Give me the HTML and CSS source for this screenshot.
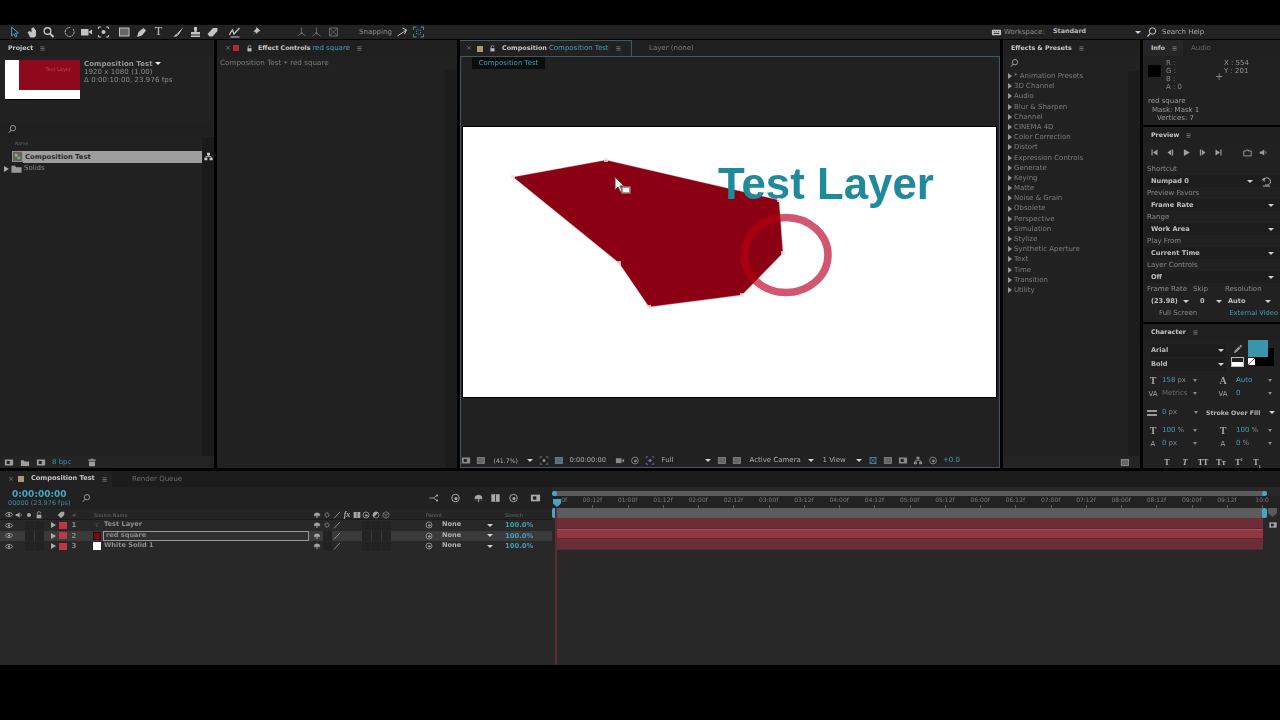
FILE: index.html
```html
<!DOCTYPE html>
<html lang="en">
<head>
<meta charset="utf-8">
<title>Composition Test</title>
<link rel="stylesheet" href="styles.css">
</head>
<body>
<svg class="defs" width="0" height="0" aria-hidden="true">
  <symbol id="i-arrow" viewBox="0 0 12 12"><path d="M3 1v9l2.400-2 1.600 3 1.500-.8-1.600-2.900 3-.3z" fill="none" stroke="currentColor"/></symbol>
  <symbol id="i-hand" viewBox="0 0 12 12"><path d="M2 6l2 4c.5 1 1 1.500 2 1.500h2c1.500 0 2.500-1 2.500-2.500V4H9.500v2V2.500H8.500V6V1.500H7.200V6V2H6v4.500L4.500 5z" fill="currentColor"/></symbol>
  <symbol id="i-zoom" viewBox="0 0 12 12"><circle cx="5" cy="5" r="3.300" fill="none" stroke="currentColor" stroke-width="1.400"/><path d="M7.500 7.500l3.500 3.500" stroke="currentColor" stroke-width="2"/></symbol>
  <symbol id="i-search" viewBox="0 0 12 12"><circle cx="6" cy="5" r="3.200" fill="none" stroke="currentColor"/><path d="M3.800 7.300L1 10.500" stroke="currentColor" stroke-width="1.200"/></symbol>
  <symbol id="i-rotate" viewBox="0 0 12 12"><path d="M9.500 3a4.500 4.500 0 1 1-3-1.500" fill="none" stroke="currentColor" stroke-dasharray="2 .8"/></symbol>
  <symbol id="i-camera" viewBox="0 0 12 12"><rect x="0.500" y="3" width="7.500" height="6.500" fill="currentColor"/><path d="M8 6l3.500-2.500v5z" fill="currentColor"/></symbol>
  <symbol id="i-orbit" viewBox="0 0 12 12"><circle cx="6" cy="6" r="2" fill="currentColor"/><path d="M1 3V1h2.500M8.500 1H11v2M11 9v2H8.500M3.500 11H1V9" fill="none" stroke="currentColor"/></symbol>
  <symbol id="i-rect" viewBox="0 0 12 12"><rect x="1" y="2" width="9.500" height="8" fill="#666" stroke="currentColor"/></symbol>
  <symbol id="i-pen" viewBox="0 0 12 12"><path d="M1.500 11l1.500-5 5-4 2.500 2.500-4 5z" fill="currentColor"/></symbol>
  <symbol id="i-brush" viewBox="0 0 12 12"><path d="M11 1L4.500 7.500 6 9zM4 8c-1.500.5-1.500 2-3 2.500 2 .5 4 0 4.500-1.500z" fill="currentColor"/></symbol>
  <symbol id="i-stamp" viewBox="0 0 12 12"><path d="M4.500 1h3v2.500L7 6h3.500v2.500h-9V6H5L4.500 3.500zM1.500 9.500h9V11h-9z" fill="currentColor"/></symbol>
  <symbol id="i-eraser" viewBox="0 0 12 12"><path d="M1 8l5.500-6h4.500L11 5 6 10.500H3z" fill="currentColor"/></symbol>
  <symbol id="i-roto" viewBox="0 0 12 12"><path d="M1 9c1-3 2-4 3-5l1.500 4L11 2" fill="none" stroke="currentColor" stroke-width="1.300"/><path d="M2 11h9" stroke="currentColor"/></symbol>
  <symbol id="i-pin" viewBox="0 0 12 12"><path d="M7 1l4 4-2 .5L7 8 6.500 6 2 11l4-5-2-.5L6.500 3z" fill="currentColor"/></symbol>
  <symbol id="i-axis" viewBox="0 0 12 12"><path d="M6 1.500V7M6 7l-4 3M6 7l4 3" stroke="currentColor" fill="none"/><circle cx="6" cy="7" r="1.200" fill="currentColor"/></symbol>
  <symbol id="i-box3" viewBox="0 0 12 12"><path d="M2 2l8 8M10 2l-8 8M2 2h8v8H2z" stroke="currentColor" fill="none"/></symbol>
  <symbol id="i-snap" viewBox="0 0 12 12"><path d="M1 10L10 4M6 2l4 2-2 4" stroke="currentColor" fill="none"/></symbol>
  <symbol id="i-snap2" viewBox="0 0 12 12"><path d="M1 4V1h3M8 1h3v3M11 8v3H8M4 11H1V8" stroke="#3c8f96" fill="none"/><rect x="4" y="4" width="4" height="4" fill="none" stroke="#3c8f96" stroke-dasharray="1 1"/></symbol>
  <symbol id="i-menu" viewBox="0 0 6 6"><path d="M.5 1h5M.5 3h5M.5 5h5" stroke="currentColor"/></symbol>
  <symbol id="i-flow" viewBox="0 0 12 12"><rect x="4" y="1" width="4" height="3.500" fill="currentColor"/><rect x="0.500" y="7.500" width="4" height="3.500" fill="currentColor"/><rect x="7.500" y="7.500" width="4" height="3.500" fill="currentColor"/><path d="M6 4v2M2.500 7.500V6h7v1.500" stroke="currentColor" fill="none"/></symbol>
  <symbol id="i-tree" viewBox="0 0 12 12"><path d="M1 6h5M6 6l4-3M6 6l4 3" stroke="currentColor" fill="none"/><rect x="9" y="2" width="2.500" height="2" fill="currentColor"/><rect x="9" y="8" width="2.500" height="2" fill="currentColor"/></symbol>
  <symbol id="i-comp" viewBox="0 0 12 12"><rect x="0.500" y="0.500" width="11" height="11" fill="#5e6a50" stroke="#999"/><rect x="3" y="3" width="3" height="3" fill="#b98"/><rect x="6" y="6" width="3" height="3" fill="#6a8"/></symbol>
  <symbol id="i-folder" viewBox="0 0 12 12"><path d="M.5 3h4l1 1.500h6V10.500H.5z" fill="currentColor"/></symbol>
  <symbol id="i-trash" viewBox="0 0 12 12"><path d="M4.500 1h3v1H11v1.500H1V2h3.500zM2 4.500h8V11H2z" fill="currentColor"/></symbol>
  <symbol id="i-film" viewBox="0 0 12 12"><rect x="0.500" y="2" width="11" height="8" fill="currentColor"/><rect x="3" y="4" width="4" height="4" fill="#222"/></symbol>
  <symbol id="i-lock" viewBox="0 0 12 12"><path d="M3.500 5.500V3.500a2.500 2.500 0 0 1 5 0" fill="none" stroke="currentColor" stroke-width="1.200"/><rect x="2.500" y="5.500" width="7" height="5.500" fill="currentColor"/></symbol>
  <symbol id="i-first" viewBox="0 0 12 12"><path d="M2 2v8h1.500V2zM10 2v8L4 6z" fill="currentColor"/></symbol>
  <symbol id="i-prev" viewBox="0 0 12 12"><path d="M8 2v8h1.500V2zM7 2v8L2 6z" fill="currentColor"/></symbol>
  <symbol id="i-play" viewBox="0 0 12 12"><path d="M2.500 1.500v9L10.500 6z" fill="currentColor"/></symbol>
  <symbol id="i-next" viewBox="0 0 12 12"><path d="M2.500 2v8H4V2zM5 2v8l5-4z" fill="currentColor"/></symbol>
  <symbol id="i-last" viewBox="0 0 12 12"><path d="M2 2v8l6-4zM8.500 2v8H10V2z" fill="currentColor"/></symbol>
  <symbol id="i-loop" viewBox="0 0 12 12"><path d="M1 4h3l1-1.500h2V4h4v6.500H1z" fill="none" stroke="currentColor" stroke-width="1.200"/></symbol>
  <symbol id="i-speaker" viewBox="0 0 12 12"><path d="M1 4.500h2.500L7 2v8L3.500 7.500H1z" fill="currentColor"/><path d="M8.500 4c1 1 1 3 0 4" stroke="currentColor" fill="none"/></symbol>
  <symbol id="i-reset" viewBox="0 0 12 12"><path d="M2.500 5a4 4 0 1 1 2 4.500M1 4.500l2.500-2L3.500 6M2 11h8" fill="none" stroke="currentColor"/></symbol>
  <symbol id="i-drop" viewBox="0 0 12 12"><path d="M1 11l1-3 5-5 2 2-5 5zM7.500 2.500L9.500 1l1.500 1.500L9.500 4.500z" fill="currentColor"/></symbol>
  <symbol id="i-eye" viewBox="0 0 12 12"><path d="M1 6c2-3.500 8-3.500 10 0-2 3.500-8 3.500-10 0z" fill="none" stroke="currentColor" stroke-width="1.200"/><circle cx="6" cy="6" r="1.500" fill="currentColor"/></symbol>
  <symbol id="i-tag" viewBox="0 0 12 12"><path d="M1 6l5-5h5v5l-5 5z" fill="currentColor"/></symbol>
  <symbol id="i-shy" viewBox="0 0 12 12"><path d="M1.500 7a4.500 4.500 0 0 1 9 0zM5.500 7h1v3.500h-1zM3 8l-1 1.500M9 8l1 1.500" fill="currentColor" stroke="currentColor" stroke-width=".5"/></symbol>
  <symbol id="i-gear" viewBox="0 0 12 12"><circle cx="6" cy="6" r="3" fill="none" stroke="currentColor" stroke-width="1.500" stroke-dasharray="1.500 .6"/></symbol>
  <symbol id="i-slash" viewBox="0 0 12 12"><path d="M1.500 11L10.500 1.500" stroke="currentColor" stroke-width="1.200"/></symbol>
  <symbol id="i-spiral" viewBox="0 0 12 12"><circle cx="6" cy="6" r="4.500" fill="none" stroke="currentColor" stroke-width="1.200"/><circle cx="6.500" cy="6.500" r="1.800" fill="currentColor"/></symbol>
  <symbol id="i-half" viewBox="0 0 12 12"><circle cx="6" cy="6" r="4.500" fill="none" stroke="currentColor"/><path d="M2.800 9.200a4.500 4.500 0 0 1 6.400-6.400z" fill="currentColor"/></symbol>
  <symbol id="i-cube" viewBox="0 0 12 12"><path d="M6 1l4.500 2.500v5L6 11 1.500 8.500v-5zM1.500 3.500L6 6l4.500-2.500M6 6v5" fill="none" stroke="currentColor" stroke-width=".8"/></symbol>
  <symbol id="i-book" viewBox="0 0 12 12"><rect x="1" y="1.500" width="10" height="9" fill="currentColor"/><path d="M6 2v8" stroke="#222"/></symbol>
  <symbol id="i-keys" viewBox="0 0 12 12"><rect x="1" y="3" width="10" height="6" rx="1" fill="currentColor"/><path d="M3 5h1M5.500 5h1M8 5h1M3 7h6" stroke="#222"/></symbol>
</svg>

<div class="app">
  <div class="letterbox-top"></div>

  <div class="toolbar">
    <span class="tools">
      <svg class="ti blue"><use href="#i-arrow"/></svg>
      <svg class="ti"><use href="#i-hand"/></svg>
      <svg class="ti"><use href="#i-zoom"/></svg>
      <svg class="ti sep"><use href="#i-rotate"/></svg>
      <svg class="ti"><use href="#i-camera"/></svg>
      <svg class="ti"><use href="#i-orbit"/></svg>
      <svg class="ti sep"><use href="#i-rect"/></svg>
      <svg class="ti"><use href="#i-pen"/></svg>
      <span class="ti t-glyph">T</span>
      <svg class="ti sep-s"><use href="#i-brush"/></svg>
      <svg class="ti"><use href="#i-stamp"/></svg>
      <svg class="ti"><use href="#i-eraser"/></svg>
      <svg class="ti sep-r"><use href="#i-roto"/></svg>
      <svg class="ti sep-p"><use href="#i-pin"/></svg>
      <svg class="ti dim sep-l"><use href="#i-axis"/></svg>
      <svg class="ti dim"><use href="#i-axis"/></svg>
      <svg class="ti dim"><use href="#i-box3"/></svg>
    </span>
    <span class="snap-label">Snapping</span>
    <svg class="ti snap-a"><use href="#i-snap"/></svg>
    <svg class="ti"><use href="#i-snap2"/></svg>
    <span class="grow"></span>
    <svg class="keys"><use href="#i-keys"/></svg>
    <span class="workspace-label">Workspace:</span>
    <span class="workspace-val">Standard</span>
    <span class="caret wk"></span>
    <svg class="ti help-i"><use href="#i-search"/></svg>
    <span class="help">Search Help</span>
  </div>

  <div class="panels">
    <section class="panel project">
      <header class="phead">
        <b>Project</b><svg class="menu"><use href="#i-menu"/></svg>
      </header>
      <div class="proj-info">
        <div class="thumb"><div class="thumb-red">Test Layer</div></div>
        <div class="proj-meta">
          <div class="pm-title">Composition Test <span class="caret sm"></span></div>
          <div>1920 x 1080 (1.00)</div>
          <div>Δ 0:00:10:00, 23.976 fps</div>
        </div>
      </div>
      <div class="proj-search"><svg class="si"><use href="#i-search"/></svg></div>
      <div class="proj-list">
        <div class="col-name">Name</div>
        <div class="proj-row selected-row">
          <svg class="ri"><use href="#i-comp"/></svg>
          <span class="sel-name">Composition Test</span>
          <svg class="flow"><use href="#i-flow"/></svg>
        </div>
        <div class="proj-row">
          <span class="tri"></span>
          <svg class="ri folder"><use href="#i-folder"/></svg>
          <span class="solids">Solids</span>
        </div>
      </div>
      <div class="pfoot">
        <svg class="fi"><use href="#i-film"/></svg>
        <svg class="fi"><use href="#i-folder"/></svg>
        <svg class="fi"><use href="#i-film"/></svg>
        <span class="bpc">8 bpc</span>
        <svg class="fi trash"><use href="#i-trash"/></svg>
      </div>
    </section>

    <section class="panel effect">
      <header class="phead ph-ec">
        <span class="x">×</span><span class="swatch red"></span><svg class="lock"><use href="#i-lock"/></svg>
        <b>Effect Controls</b> <span class="teal">red square</span><svg class="menu m-l"><use href="#i-menu"/></svg>
      </header>
      <div class="ec-sub">Composition Test • red square</div>
      <div class="ec-body"><div class="scroll-col"></div></div>
    </section>

    <section class="panel comp">
      <div class="comp-tabs">
        <div class="comp-tab">
          <span class="x">×</span><span class="swatch tan"></span><svg class="lock"><use href="#i-lock"/></svg>
          <b>Composition</b> <span class="teal">Composition Test</span><svg class="menu m-l"><use href="#i-menu"/></svg>
        </div>
        <div class="layer-tab">Layer (none)</div>
      </div>
      <div class="comp-frame">
        <div class="comp-name"><span>Composition Test</span></div>
        <div class="viewer-wrap">
          <div class="viewer">
            <svg class="art" viewBox="0 0 533 270">
              <defs><clipPath id="clip-shape"><polygon points="50,50 143,33 316,73 320,126 279,168 186,180 156,136"/></clipPath></defs>
              <ellipse cx="323" cy="128" rx="42" ry="37.500" class="ring"/>
              <polygon points="50,50 143,33 316,73 320,126 279,168 186,180 156,136" class="shape"/>
              <ellipse cx="323" cy="128" rx="42" ry="37.500" class="ring-in" clip-path="url(#clip-shape)"/>
              <text x="255" y="71.500" class="layer-text">Test Layer</text>
              <g class="verts">
                <rect x="48" y="48" width="4" height="4"/><rect x="141" y="31" width="4" height="4"/><rect x="314" y="71" width="4" height="4"/>
                <rect x="318" y="124" width="4" height="4"/><rect x="277" y="166" width="4" height="4"/><rect x="184" y="178" width="4" height="4"/><rect x="154" y="134" width="4" height="4"/>
              </g>
              <path d="M152 50v13l3-3 2.500 5 2-1-2.500-5h4z" class="cursor"/>
              <rect x="159" y="60" width="8" height="6" class="cursor-box"/>
            </svg>
          </div>
        </div>
        <div class="comp-foot">
          <svg class="ci"><use href="#i-film"/></svg>
          <svg class="ci"><use href="#i-rect"/></svg>
          <span class="cf-zoom">(41.7%)</span><span class="caret"></span>
          <svg class="ci cf-m"><use href="#i-orbit"/></svg>
          <svg class="ci teal-i"><use href="#i-rect"/></svg>
          <span class="cf-time">0:00:00:00</span>
          <svg class="ci"><use href="#i-camera"/></svg>
          <svg class="ci dim"><use href="#i-spiral"/></svg>
          <svg class="ci colour"><use href="#i-orbit"/></svg>
          <span class="cf-full">Full</span><span class="caret"></span>
          <svg class="ci"><use href="#i-rect"/></svg>
          <svg class="ci blue"><use href="#i-rect"/></svg>
          <span class="cf-cam">Active Camera</span><span class="caret"></span>
          <span class="cf-view">1 View</span><span class="caret"></span>
          <svg class="ci teal-i"><use href="#i-box3"/></svg>
          <svg class="ci"><use href="#i-rect"/></svg>
          <svg class="ci"><use href="#i-film"/></svg>
          <svg class="ci"><use href="#i-flow"/></svg>
          <svg class="ci"><use href="#i-spiral"/></svg>
          <span class="teal cf-exp">+0.0</span>
        </div>
      </div>
    </section>

    <section class="panel effects">
      <header class="phead"><b>Effects &amp; Presets</b><svg class="menu"><use href="#i-menu"/></svg></header>
      <div class="fx-search"><svg class="si"><use href="#i-search"/></svg></div>
      <div class="fx-body">
        <ul class="fx-list">
          <li>* Animation Presets</li><li>3D Channel</li><li>Audio</li><li>Blur &amp; Sharpen</li><li>Channel</li><li>CINEMA 4D</li><li>Color Correction</li><li>Distort</li><li>Expression Controls</li><li>Generate</li><li>Keying</li><li>Matte</li><li>Noise &amp; Grain</li><li>Obsolete</li><li>Perspective</li><li>Simulation</li><li>Stylize</li><li>Synthetic Aperture</li><li>Text</li><li>Time</li><li>Transition</li><li>Utility</li>
        </ul>
        <div class="scroll-col"></div>
      </div>
      <div class="pfoot fx-foot"><svg class="fi"><use href="#i-rect"/></svg></div>
    </section>

    <div class="right-col">
      <section class="panel info">
        <header class="phead info-head"><b class="info-tab">Info<svg class="menu"><use href="#i-menu"/></svg></b><span class="audio">Audio</span></header>
        <div class="info-main">
          <div class="info-swatch"></div>
          <div class="rgba"><div>R :</div><div>G :</div><div>B :</div><div>A : 0</div></div>
          <span class="plus">+</span>
          <div class="xy"><div>X : 554</div><div>Y : 201</div></div>
        </div>
        <div class="info-notes">
          <div>red square</div><div class="in1">Mask: Mask 1</div><div class="in2">Vertices: 7</div>
        </div>
      </section>

      <section class="panel preview">
        <header class="phead"><b>Preview</b><svg class="menu"><use href="#i-menu"/></svg></header>
        <div class="transport">
          <svg class="pi"><use href="#i-first"/></svg><svg class="pi"><use href="#i-prev"/></svg><svg class="pi"><use href="#i-play"/></svg><svg class="pi"><use href="#i-next"/></svg><svg class="pi"><use href="#i-last"/></svg>
          <span class="grow"></span>
          <svg class="pi"><use href="#i-loop"/></svg><svg class="pi"><use href="#i-speaker"/></svg>
        </div>
        <div class="plabel">Shortcut</div>
        <div class="sel short"><span>Numpad 0</span><span class="caret"></span><svg class="reset"><use href="#i-reset"/></svg></div>
        <div class="plabel">Preview Favors</div>
        <div class="sel"><span>Frame Rate</span><span class="caret"></span></div>
        <div class="plabel">Range</div>
        <div class="sel"><span>Work Area</span><span class="caret"></span></div>
        <div class="plabel">Play From</div>
        <div class="sel"><span>Current Time</span><span class="caret"></span></div>
        <div class="plabel">Layer Controls</div>
        <div class="sel"><span>Off</span><span class="caret"></span></div>
        <div class="plabel triple"><span>Frame Rate</span><span>Skip</span><span>Resolution</span></div>
        <div class="sel triple-sel">
          <span class="ts a">(23.98)<i class="caret"></i></span><span class="ts b">0<i class="caret"></i></span><span class="ts c">Auto<i class="caret"></i></span>
        </div>
        <div class="preview-foot"><span class="full-screen">Full Screen</span><span class="teal">External Video</span></div>
      </section>

      <section class="panel character">
        <header class="phead"><b>Character</b><svg class="menu"><use href="#i-menu"/></svg></header>
        <div class="font-block">
          <div class="font-rows">
            <div class="font-row"><span>Arial</span><span class="caret"></span></div>
            <div class="font-row"><span>Bold</span><span class="caret"></span></div>
          </div>
          <div class="font-tools">
            <svg class="drop"><use href="#i-drop"/></svg>
            <div class="wb"></div>
          </div>
          <div class="swatches">
            <div class="sw-back"></div><div class="sw-fill"></div><div class="sw-none"></div>
          </div>
        </div>
        <div class="cgrid">
          <div class="cc"><span class="gl">T</span><span class="teal v">158</span> <span class="unit">px</span><span class="mini"></span></div>
          <div class="cc"><span class="gl">A</span><span class="teal v">Auto</span><span class="mini"></span></div>
          <div class="cc"><span class="gl sm-gl">VA</span><span class="grey v">Metrics</span><span class="mini"></span></div>
          <div class="cc"><span class="gl sm-gl">VA</span><span class="teal v">0</span><span class="mini"></span></div>
        </div>
        <div class="stroke-row">
          <span class="bars"></span><span class="teal v">0</span> <span class="unit">px</span><span class="mini"></span>
          <span class="stroke-name">Stroke Over Fill</span><span class="caret"></span>
        </div>
        <div class="cgrid second">
          <div class="cc"><span class="gl">T</span><span class="teal v">100</span> <span class="unit">%</span><span class="mini"></span></div>
          <div class="cc"><span class="gl">T</span><span class="teal v">100</span> <span class="unit">%</span><span class="mini"></span></div>
          <div class="cc"><span class="gl sm-gl">A</span><span class="teal v">0</span> <span class="unit">px</span><span class="mini"></span></div>
          <div class="cc"><span class="gl sm-gl">A</span><span class="teal v">0</span> <span class="unit">%</span><span class="mini"></span></div>
        </div>
        <div class="styles-row"><span>T</span><span class="it">T</span><span>TT</span><span>Tт</span><span>T<sup>1</sup></span><span>T<sub>1</sub></span></div>
      </section>
    </div>
  </div>

  <section class="timeline">
    <div class="tl-tabs">
      <div class="tl-tab"><span class="x">×</span><span class="swatch tan"></span><b>Composition Test</b><svg class="menu"><use href="#i-menu"/></svg></div>
      <div class="tl-rq">Render Queue</div>
    </div>
    <div class="tl-body">
      <div class="tl-left">
        <div class="tl-time">
          <div class="tc"><div class="tc-big">0:00:00:00</div><div class="tc-sub">00000 (23.976 fps)</div></div>
          <svg class="si tl-search"><use href="#i-search"/></svg>
          <span class="grow"></span>
          <svg class="ti2 t1"><use href="#i-tree"/></svg>
          <svg class="ti2 t2"><use href="#i-spiral"/></svg>
          <svg class="ti2 t3"><use href="#i-shy"/></svg>
          <svg class="ti2 t4"><use href="#i-book"/></svg>
          <svg class="ti2 t5"><use href="#i-spiral"/></svg>
          <svg class="ti2 t6"><use href="#i-film"/></svg>
        </div>
        <div class="lrow lhead">
          <svg class="li c-eye"><use href="#i-eye"/></svg>
          <svg class="li c-a"><use href="#i-speaker"/></svg>
          <span class="c-b dot"></span>
          <svg class="li c-c"><use href="#i-lock"/></svg>
          <svg class="li c-tag"><use href="#i-tag"/></svg>
          <span class="c-num hash">#</span>
          <span class="c-src src">Source Name</span>
          <svg class="li c-s1"><use href="#i-shy"/></svg>
          <svg class="li c-s2"><use href="#i-gear"/></svg>
          <svg class="li c-s3"><use href="#i-slash"/></svg>
          <span class="c-fx fx">fx</span>
          <svg class="li c-s5"><use href="#i-book"/></svg>
          <svg class="li c-s6"><use href="#i-spiral"/></svg>
          <svg class="li c-s7"><use href="#i-half"/></svg>
          <svg class="li c-s8"><use href="#i-cube"/></svg>
          <span class="c-par parent">Parent</span>
          <span class="c-str stretch">Stretch</span>
        </div>
        <div class="lrow">
          <svg class="li c-eye"><use href="#i-eye"/></svg><span class="bx c-b"></span><span class="bx c-c"></span><span class="tri c-tri"></span><span class="lab c-lab"></span><span class="c-num">1</span>
          <span class="c-icon txt-i">T</span><span class="c-name lname">Test Layer</span>
          <svg class="li c-s1"><use href="#i-shy"/></svg><svg class="li c-s2 dim"><use href="#i-gear"/></svg><svg class="li c-s3"><use href="#i-slash"/></svg>
          <span class="bx c-s6"></span><span class="bx c-s7"></span><span class="bx c-s8"></span>
          <svg class="li c-spi"><use href="#i-spiral"/></svg><span class="c-none">None</span><span class="caret c-car"></span><span class="c-str teal pct">100.0%</span>
        </div>
        <div class="lrow cur">
          <svg class="li c-eye"><use href="#i-eye"/></svg><span class="bx c-b"></span><span class="bx c-c"></span><span class="tri c-tri"></span><span class="lab c-lab"></span><span class="c-num">2</span>
          <span class="c-icon solid-red"></span><span class="c-name edit">red square</span>
          <svg class="li c-s1"><use href="#i-shy"/></svg><span class="bx c-s2"></span><svg class="li c-s3"><use href="#i-slash"/></svg>
          <span class="bx c-s6"></span><span class="bx c-s7"></span><span class="bx c-s8"></span>
          <svg class="li c-spi"><use href="#i-spiral"/></svg><span class="c-none">None</span><span class="caret c-car"></span><span class="c-str teal pct">100.0%</span>
        </div>
        <div class="lrow">
          <svg class="li c-eye"><use href="#i-eye"/></svg><span class="bx c-b"></span><span class="bx c-c"></span><span class="tri c-tri"></span><span class="lab c-lab"></span><span class="c-num">3</span>
          <span class="c-icon solid-white"></span><span class="c-name lname">White Solid 1</span>
          <svg class="li c-s1"><use href="#i-shy"/></svg><span class="bx c-s2"></span><svg class="li c-s3"><use href="#i-slash"/></svg>
          <span class="bx c-s6"></span><span class="bx c-s7"></span><span class="bx c-s8"></span>
          <svg class="li c-spi"><use href="#i-spiral"/></svg><span class="c-none">None</span><span class="caret c-car"></span><span class="c-str teal pct">100.0%</span>
        </div>
      </div>
      <div class="tl-right">
        <div class="nav-bar"></div>
        <div class="ruler">
          <span class="first-tick">0f</span><span>00:12f</span><span>01:00f</span><span>01:12f</span><span>02:00f</span><span>02:12f</span><span>03:00f</span><span>03:12f</span><span>04:00f</span><span>04:12f</span><span>05:00f</span><span>05:12f</span><span>06:00f</span><span>06:12f</span><span>07:00f</span><span>07:12f</span><span>08:00f</span><span>08:12f</span><span>09:00f</span><span>09:12f</span><span>10:0</span>
        </div>
        <div class="work-bar"></div>
        <div class="bar"></div>
        <div class="bar cur-bar"></div>
        <div class="bar"></div>
        <div class="playhead"></div>
        <div class="ph-head"></div>
        <div class="side-ic"><span class="shield"></span><svg class="li"><use href="#i-film"/></svg></div>
      </div>
    </div>
  </section>

  <div class="letterbox-bottom"></div>
</div>
</body>
</html>
```
FILE: styles.css
```css
* { box-sizing: border-box; }
html, body { margin: 0; padding: 0; background: #000; }
body { width: 1280px; height: 720px; overflow: hidden; font: 7px/1.2 "DejaVu Sans", "Noto Sans", sans-serif; color: #a8a8a8; }
.defs { position: absolute; }
.app { width: 1280px; height: 720px; display: flex; flex-direction: column; filter: blur(.35px); }
.letterbox-top { height: 25px; background: #000; }
.letterbox-bottom { flex: 1; background: #000; }
.grow { flex: 1; }
b { font-weight: 700; }
svg { display: block; flex: none; }

/* toolbar */
.toolbar { height: 14px; margin-bottom: 1px; background: #222; display: flex; align-items: center; padding-left: 8px; color: #c4c4c4; }
.tools { display: flex; align-items: center; }
.ti { width: 13px; height: 12px; margin-right: 4px; }
.blue { color: #4d9bc4; }
.dim { color: #666; }
.sep { margin-left: 4px; }
.sep-s { margin-left: 3px; }
.sep-r { margin-left: 5px; }
.sep-p { margin-left: 4px; }
.sep-l { margin-left: 29px; margin-right: 2px; }
.t-glyph { font: 12px/11px "Liberation Serif", serif; text-align: center; }
.snap-label { font-size: 7px; margin-left: 15px; color: #8e8e8e; }
.snap-a { margin-left: 4px; margin-right: 3px; }
.keys { width: 13px; height: 11px; color: #c4c4c4; }
.workspace-label { margin-left: 1px; color: #8c8c8c; width: 49px; }
.workspace-val { width: 82px; font-weight: 700; font-size: 6.400px; color: #b8b8b8; }
.wk { margin-right: 5px; }
.help-i { margin-right: 3px; }
.help { width: 118px; color: #aaa; }

.caret { display: inline-block; width: 0; height: 0; border-left: 3px solid transparent; border-right: 3px solid transparent; border-top: 3px solid #d0d0d0; flex: none; }
.caret.sm { border-top-color: #eee; vertical-align: 1px; }
.mini { display: inline-block; width: 0; height: 0; border-left: 2px solid transparent; border-right: 2px solid transparent; border-top: 3px solid #888; flex: none; }
.tri { display: inline-block; width: 0; height: 0; border-top: 3px solid transparent; border-bottom: 3px solid transparent; border-left: 5px solid #aaa; flex: none; }

/* panels */
.panels { height: 428px; display: grid; grid-template-columns: 214px 240px 540px 137px 138px; column-gap: 3px; }
.panel { background: #212121; display: flex; flex-direction: column; min-width: 0; }
.phead { height: 16px; flex: none; display: flex; align-items: center; padding-left: 8px; background: #1f1f1f; color: #c8c8c8; white-space: nowrap; }
.phead b { font-size: 6.300px; }
.menu { width: 5px; height: 5px; margin-left: 7px; color: #777; flex: none; }
.teal { color: #4a9bb5; }
.x { color: #777; width: 9px; flex: none; }
.swatch { width: 6px; height: 6px; margin-right: 5px; flex: none; }
.swatch.red { background: #b02a38; }
.swatch.tan { background: #a89a78; }
.lock { width: 7px; height: 7px; margin-right: 5px; color: #bbb; }

/* project */
.proj-info { display: flex; height: 67px; padding: 4px 0 0 5px; flex: none; }
.thumb { width: 75px; height: 39px; background: #fff; box-shadow: 0 1px 0 #000; }
.thumb-red { width: 61px; height: 30px; margin-left: 14px; background: #8d0a1c; color: #b9475a; font-size: 5px; text-align: right; padding: 6px 9px 0 0; }
.proj-meta { margin-left: 4px; line-height: 7.800px; color: #8d8d8d; font-size: 7px; letter-spacing: .06px; padding-top: 1px; }
.pm-title { font-weight: 700; color: #999; }
.proj-search { height: 14px; padding: 1px 0 0 8px; flex: none; background: #1f1f1f; margin: 0 4px 0 0; }
.si { width: 10px; height: 10px; color: #aaa; }
.proj-list { flex: 1; background: linear-gradient(to right, transparent 202px, #1a1a1a 202px); padding-top: 3px; }
.col-name { height: 11px; padding-left: 15px; font-size: 4.500px; line-height: 8px; color: #666; }
.proj-row { height: 11px; margin-bottom: 1px; display: flex; align-items: center; padding-left: 4px; }
.selected-row { margin-left: 12px; padding-left: 0; }
.ri { width: 11px; height: 11px; }
.sel-name { width: 179px; height: 12px; background: #9e9e9e; color: #2a2a2a; font-weight: 700; font-size: 6.800px; line-height: 12px; padding-left: 2px; flex: none; }
.flow { width: 9px; height: 9px; margin-left: 2px; color: #c8c8c8; }
.proj-row .tri { margin-right: 2px; }
.folder { color: #9a9a9a; margin-right: 2px; }
.solids { color: #888; }
.pfoot { height: 12px; flex: none; background: #242424; display: flex; align-items: center; padding-left: 4px; }
.fi { width: 10px; height: 9px; margin-right: 6px; color: #9c9c9c; }
.bpc { color: #3f8aa6; width: 25px; margin-right: 10px; }
.project .pfoot { margin-right: 4px; }

/* effect controls */
.ec-sub { height: 14px; line-height: 13px; padding-left: 3px; color: #7e7e7e; flex: none; font-size: 7.200px; }
.ec-body { flex: 1; display: flex; justify-content: flex-end; }
.scroll-col { width: 12px; background: #1c1c1c; }
.ph-ec .x { width: 8px; }
.ph-ec .swatch { margin-right: 7px; }
.ph-ec b { margin-right: 2px; }

/* comp */
.comp { background: #212121; }
.comp-tabs { height: 16px; display: flex; flex: none; background: #1f1f1f; }
.comp-tab { width: 172px; flex: none; display: flex; align-items: center; padding-left: 6px; border: 1px solid #3e5964; border-bottom: 0; border-left: 0; color: #c8c8c8; background: #212121; white-space: nowrap; }
.comp-tab .x { width: 11px; }
.comp-tab .swatch { margin-right: 6px; }
.comp-tab .lock { margin-right: 6px; }
.comp-tab b { margin-right: 2px; font-size: 6.400px; }
.layer-tab { padding-left: 17px; line-height: 16px; color: #7e7e7e; }
.comp-frame { flex: 1; display: flex; flex-direction: column; border: 1px solid #3e5964; min-height: 0; }
.comp-name { height: 12px; flex: none; padding-left: 11px; }
.comp-name span { display: inline-block; height: 12px; width: 73px; background: #0c0c0c; color: #4a9bb5; text-align: center; line-height: 12px; }
.viewer-wrap { flex: 1; padding: 58px 2px 0; }
.viewer { width: 533px; height: 270px; background: #fff; box-shadow: 0 0 0 1px #000; }
.art { width: 533px; height: 270px; display: block; }
.shape { fill: #8b0012; stroke: rgba(240, 190, 200, .45); stroke-width: .8; }
.ring { fill: none; stroke: #d2566f; stroke-width: 7.500; }
.ring-in { fill: none; stroke: #a80012; stroke-width: 7.500; }
.layer-text { font: 700 43.800px "Liberation Sans", Arial, sans-serif; fill: #1f8a9c; }
.verts rect { fill: #f3dfe3; opacity: .75; }
.cursor { fill: #f5f0f0; stroke: #5d3a3a; stroke-width: 1; }
.cursor-box { fill: #f5f5f5; stroke: #a07070; stroke-width: 1.500; }
.comp-foot { height: 13px; flex: none; margin-top: auto; display: flex; align-items: center; color: #a8a8a8; font-size: 7px; white-space: nowrap; }
.ci { width: 10px; height: 9px; margin: 0 2.500px; color: #8a8a8a; }
.comp-foot .ci:first-child { margin-left: 0; }
.cf-zoom { margin: 0 8.500px 0 5px; color: #aaa; font-size: 6.200px; width: 25px; }
.teal-i { color: #4a9bb5; }
.cf-time { margin: 0 4px 0 3px; width: 39px; font-size: 6.700px; color: #b0b0b0; }
.colour { color: #7d6ec0; }
.cf-full { width: 43.500px; margin-left: 4px; color: #aaa; }
.comp-foot .caret + .ci { margin-left: 6px; }
.cf-cam { width: 58px; margin-left: 5px; color: #b0b0b0; }
.cf-view { width: 33px; margin-left: 9px; color: #aaa; }
.cf-exp { margin-left: 3px; }

/* effects */
.fx-search { height: 15px; flex: none; padding: 2px 0 0 7px; }
.fx-body { flex: 1; display: flex; min-height: 0; }
.fx-list { flex: 1; margin: 0; padding: 0 0 0 5px; list-style: none; color: #7e7e7e; }
.fx-list li { height: 10.200px; line-height: 10.200px; display: flex; align-items: center; }
.fx-list li::before { content: ""; border-top: 3px solid transparent; border-bottom: 3px solid transparent; border-left: 4px solid #999; margin-right: 2px; }
.fx-foot { justify-content: flex-end; padding-right: 10px; }
.fx-foot .fi { margin: 0; color: #a0a0a0; }

/* right */
.right-col { display: flex; flex-direction: column; gap: 2px; height: 428px; }
.info { height: 85px; flex: none; }
.info-head { padding-left: 0; background: #1f1f1f; }
.info-tab { display: flex; align-items: center; height: 16px; width: 40px; padding-left: 8px; background: #262626; }
.audio { padding-left: 8px; color: #666; }
.info-main { display: flex; height: 40px; padding: 3px 0 0 5px; }
.info-swatch { width: 13px; height: 12px; background: #000; margin: 6px 5px 0 0; }
.rgba { width: 42px; line-height: 8px; color: #8a8a8a; }
.plus { width: 18px; margin-left: 7px; padding-top: 13px; font-size: 10px; line-height: 10px; color: #888; }
.xy { line-height: 8px; color: #999; margin-left: -9px; }
.info-notes { line-height: 8.500px; padding: 1px 0 0 5px; color: #9a9a9a; }
.in1 { padding-left: 4px; }
.in2 { padding-left: 9px; }

.preview { height: 195px; flex: none; }
.transport { height: 20px; flex: none; display: flex; align-items: center; padding: 0 13px 2px 7px; gap: 7px; color: #a0a0a0; }
.pi { width: 9px; height: 9px; }
.plabel { height: 12px; line-height: 12px; padding-left: 4px; color: #8a8a8a; flex: none; }
.sel { height: 12px; line-height: 12px; padding: 0 7px 0 5px; display: flex; align-items: center; justify-content: space-between; background: #1d1d1d; color: #c0c0c0; font-weight: 700; font-size: 6.600px; flex: none; margin-left: 3px; }
.sel.short { padding-right: 9px; }
.sel.short span:first-child { flex: 1; }
.reset { width: 11px; height: 11px; margin-left: 8px; color: #bbb; }
.triple { display: flex; }
.triple span:nth-child(1) { width: 46px; }
.triple span:nth-child(2) { width: 32px; }
.triple-sel { justify-content: flex-start; background: none; padding-left: 5px; }
.ts { display: flex; align-items: center; }
.ts.a { width: 44px; gap: 5px; }
.ts.b { width: 33px; padding-left: 5px; gap: 11px; }
.ts.c { flex: 1; justify-content: space-between; padding-right: 3px; }
.preview-foot { display: flex; justify-content: space-between; padding: 0 3px 0 16px; line-height: 12px; color: #8c8c8c; }
.preview-foot .teal { font-size: 6.700px; }

.character { flex: 1; min-height: 0; }
.font-block { display: flex; height: 32px; flex: none; position: relative; padding-top: 4px; }
.font-rows { width: 83px; padding-left: 8px; font-weight: 700; font-size: 6.600px; color: #b8b8b8; }
.font-row { display: flex; justify-content: space-between; align-items: center; height: 13px; margin-bottom: 1px; background: #1d1d1d; padding-right: 2px; }
.font-tools { width: 20px; padding: 0 0 0 7px; }
.drop { width: 10px; height: 10px; color: #999; }
.wb { width: 13px; height: 10px; margin-left: -2px; margin-top: 3px; background: linear-gradient(#222 45%, #fff 45%); border: 1px solid #bbb; }
.swatches { width: 27px; height: 28px; position: relative; margin-left: 2px; margin-top: -4px; }
.sw-back { width: 19px; height: 18px; background: #000; margin: 8px 0 0 7px; position: absolute; }
.sw-fill { width: 20px; height: 17px; background: #3a94ac; position: absolute; top: 0; left: 0; }
.sw-none { width: 7px; height: 7px; background: linear-gradient(135deg, #fff 45%, #d04060 45%, #d04060 55%, #fff 55%); position: absolute; top: 18px; left: 0; }
.cgrid { display: grid; grid-template-columns: 70px 1fr; padding: 0 0 0 3px; flex: none; margin-top: 2px; }
.cc { display: flex; align-items: center; height: 13px; gap: 2px; }
.gl { width: 14px; font: 700 10px/12px "Liberation Serif", serif; color: #a5a5a5; text-align: center; flex: none; }
.sm-gl { font: 7px/12px "DejaVu Sans", sans-serif; }
.cc:nth-child(even) .gl { margin-right: 4px; }
.unit { color: #888; }
.grey { color: #6b6b6b; }
.cc .mini { margin-left: auto; margin-right: 19px; }
.cc:nth-child(even) .mini { margin-right: 9px; }
.stroke-row { display: flex; align-items: center; height: 19px; padding-left: 4px; margin-top: 3px; gap: 2px; flex: none; }
.bars { width: 10px; height: 6px; border-top: 2px solid #999; border-bottom: 2px solid #999; margin-right: 3px; flex: none; }
.stroke-row .mini { margin-left: 15px; }
.stroke-name { width: 61px; margin-left: 6px; font-weight: 700; color: #b8b8b8; white-space: nowrap; font-size: 6.200px; flex: none; }
.cgrid.second { margin-top: 2px; }
.styles-row { display: flex; gap: 7px; justify-content: center; padding-top: 8px; font: 700 8px/10px "Liberation Serif", serif; color: #b8b8b8; }
.styles-row span { min-width: 11px; text-align: center; }
.it { font-style: italic; }
.styles-row sup, .styles-row sub { font-size: 4px; line-height: 0; }

/* timeline */
.timeline { margin-top: 3px; height: 194px; background: #282828; display: flex; flex-direction: column; }
.tl-tabs { height: 16px; flex: none; display: flex; background: #1c1c1c; }
.tl-tab { width: 112px; display: flex; align-items: center; padding-left: 8px; background: #212121; color: #c4c4c4; white-space: nowrap; }
.tl-tab .swatch { margin-left: 1px; margin-right: 7px; }
.tl-tab b { font-size: 6.600px; }
.tl-rq { padding-left: 20px; line-height: 16px; color: #6e6e6e; }
.tl-body { flex: 1; display: flex; min-height: 0; }
.tl-left { width: 552px; flex: none; }
.tl-time { height: 22px; display: flex; align-items: center; background: #212121; padding-left: 8px; }
.tc { width: 64px; }
.tc-big { color: #46a3c4; font: 700 9px/10px "DejaVu Sans", sans-serif; padding-left: 4px; }
.tc-sub { color: #3f8aa6; font-size: 6.500px; line-height: 7px; margin-top: 1px; white-space: nowrap; }
.tl-search { margin-left: 10px; }
.ti2 { width: 11px; height: 10px; color: #a8a8a8; }
.t1 { margin-right: 11px; }
.t2 { margin-right: 12px; }
.t3 { margin-right: 6px; }
.t4 { margin-right: 7px; }
.t5 { margin-right: 11px; }
.t6 { margin-right: 11px; }

.lrow { height: 10.500px; display: grid; align-items: center;
  grid-template-columns: 3px 11px 10px 10px 10px 5px 8px 2px 8px 14px 12px 8px 2px 206px 3px 10px 10px 10px 10px 10px 10px 10px 10px 32px 10px 7px 44px 10px 4px 1fr;
  grid-template-rows: 10.500px; font-size: 7px; color: #999; }
.lrow > * { grid-row: 1; }
.lhead { height: 11px; grid-template-rows: 11px; background: #242424; border-bottom: 1px solid #1a1a1a; }
.cur { background: #3a3a3a; }
.li { width: 8px; height: 8px; justify-self: center; color: #a5a5a5; }
.c-eye { grid-column: 2; width: 10px; height: 9px; }
.c-a { grid-column: 3; }
.c-b { grid-column: 4; }
.c-c { grid-column: 5; }
.c-tag { grid-column: 7 / 9; transform: translateX(7px); }
.c-tri { grid-column: 7; justify-self: center; }
.c-lab { grid-column: 9; }
.c-num { grid-column: 10; text-align: center; font-weight: 700; color: #8a8a8a; }
.c-icon { grid-column: 12; }
.c-src { grid-column: 12 / 15; padding-left: 1px; }
.c-name { grid-column: 14; }
.c-s1 { grid-column: 16; }
.c-s2 { grid-column: 17; }
.c-s3 { grid-column: 18; }
.c-fx { grid-column: 19; }
.c-s5 { grid-column: 20; }
.c-s6 { grid-column: 21; transform: translateX(-1px); }
.c-s7 { grid-column: 22; transform: translateX(-1px); }
.c-s8 { grid-column: 23; transform: translateX(-1px); }
.c-par { grid-column: 25 / 28; padding-left: 2px; }
.c-spi { grid-column: 25; }
.c-none { grid-column: 27; padding-left: 1px; font-weight: 700; font-size: 6.600px; color: #b0b0b0; }
.c-car { grid-column: 28; justify-self: center; }
.c-str { grid-column: 30; padding-left: 6px; }
.bx { height: 9.500px; width: 9px; background: #222; justify-self: center; }
.lab { height: 7px; background: #c03845; }
.hash { font-size: 5px; color: #666; font-weight: 400; }
.dot { width: 4px; height: 4px; border-radius: 50%; background: #aaa; justify-self: center; }
.src, .parent, .stretch { font-size: 5px; color: #6a6a6a; }
.fx { font: italic 700 8px "Liberation Serif", serif; color: #aaa; text-align: center; }
.txt-i { font: 7px "Liberation Serif", serif; color: #555; text-align: center; }
.lname { font-weight: 700; font-size: 6.600px; color: #8e8e8e; padding-left: 1px; }
.edit { border: 1px solid #999; height: 9.500px; line-height: 7.500px; color: #8a8a8a; font-weight: 700; font-size: 6.600px; padding-left: 2px; background: #303030; }
.solid-red { background: #8b0012; height: 8px; border: 1px solid #111; }
.solid-white { background: #fff; height: 8px; }
.pct { font-weight: 700; font-size: 6.800px; }

.tl-right { flex: 1; position: relative; padding-top: 4px; background: #282828; overflow: hidden; }
.nav-bar { height: 5px; margin: 0 15px 0 3px; background: #5b5b5b; position: relative; }
.nav-bar::before, .work-bar::before { content: ""; position: absolute; left: -3px; top: 0; bottom: 0; width: 5px; background: #4ba3c4; border-radius: 2px; }
.nav-bar::after, .work-bar::after { content: ""; position: absolute; right: -2px; top: 0; bottom: 0; width: 5px; background: #4ba3c4; border-radius: 2px; }
.ruler { height: 12px; display: grid; grid-template-columns: repeat(21, 35.260px); margin-left: -12.500px; font-size: 6px; line-height: 8px; color: #7a7a7a; text-align: center; white-space: nowrap; background: #222; }
.ruler span { position: relative; }
.ruler span::after { content: ""; position: absolute; left: 50%; bottom: 0; height: 3px; width: 1px; background: #5a5a5a; }
.ruler .first-tick { padding-left: 14px; }
.ruler .first-tick::after { display: none; }
.work-bar { height: 10px; margin: 0 15px 0 3px; background: #5c5c5c; position: relative; }
.bar { height: 10.500px; margin-right: 17px; margin-left: 3px; background: #6b2e36; border-bottom: 1px solid #5a2a30; }
.cur-bar { background: #923642; border-top: 1px solid #a5535c; }
.playhead { position: absolute; top: 21px; bottom: 0; left: 3px; width: 2px; background: #5c2c30; }
.ph-head { position: absolute; top: 12px; left: 1px; width: 8px; height: 8px; background: #4ba3c4; clip-path: polygon(0 0, 100% 0, 100% 55%, 50% 100%, 0 55%); }
.side-ic { position: absolute; top: 21px; right: 3px; display: flex; flex-direction: column; align-items: center; gap: 4px; }
.shield { width: 9px; height: 9px; background: #5a5a5a; clip-path: polygon(0 0, 100% 0, 100% 55%, 50% 100%, 0 55%); }
```
